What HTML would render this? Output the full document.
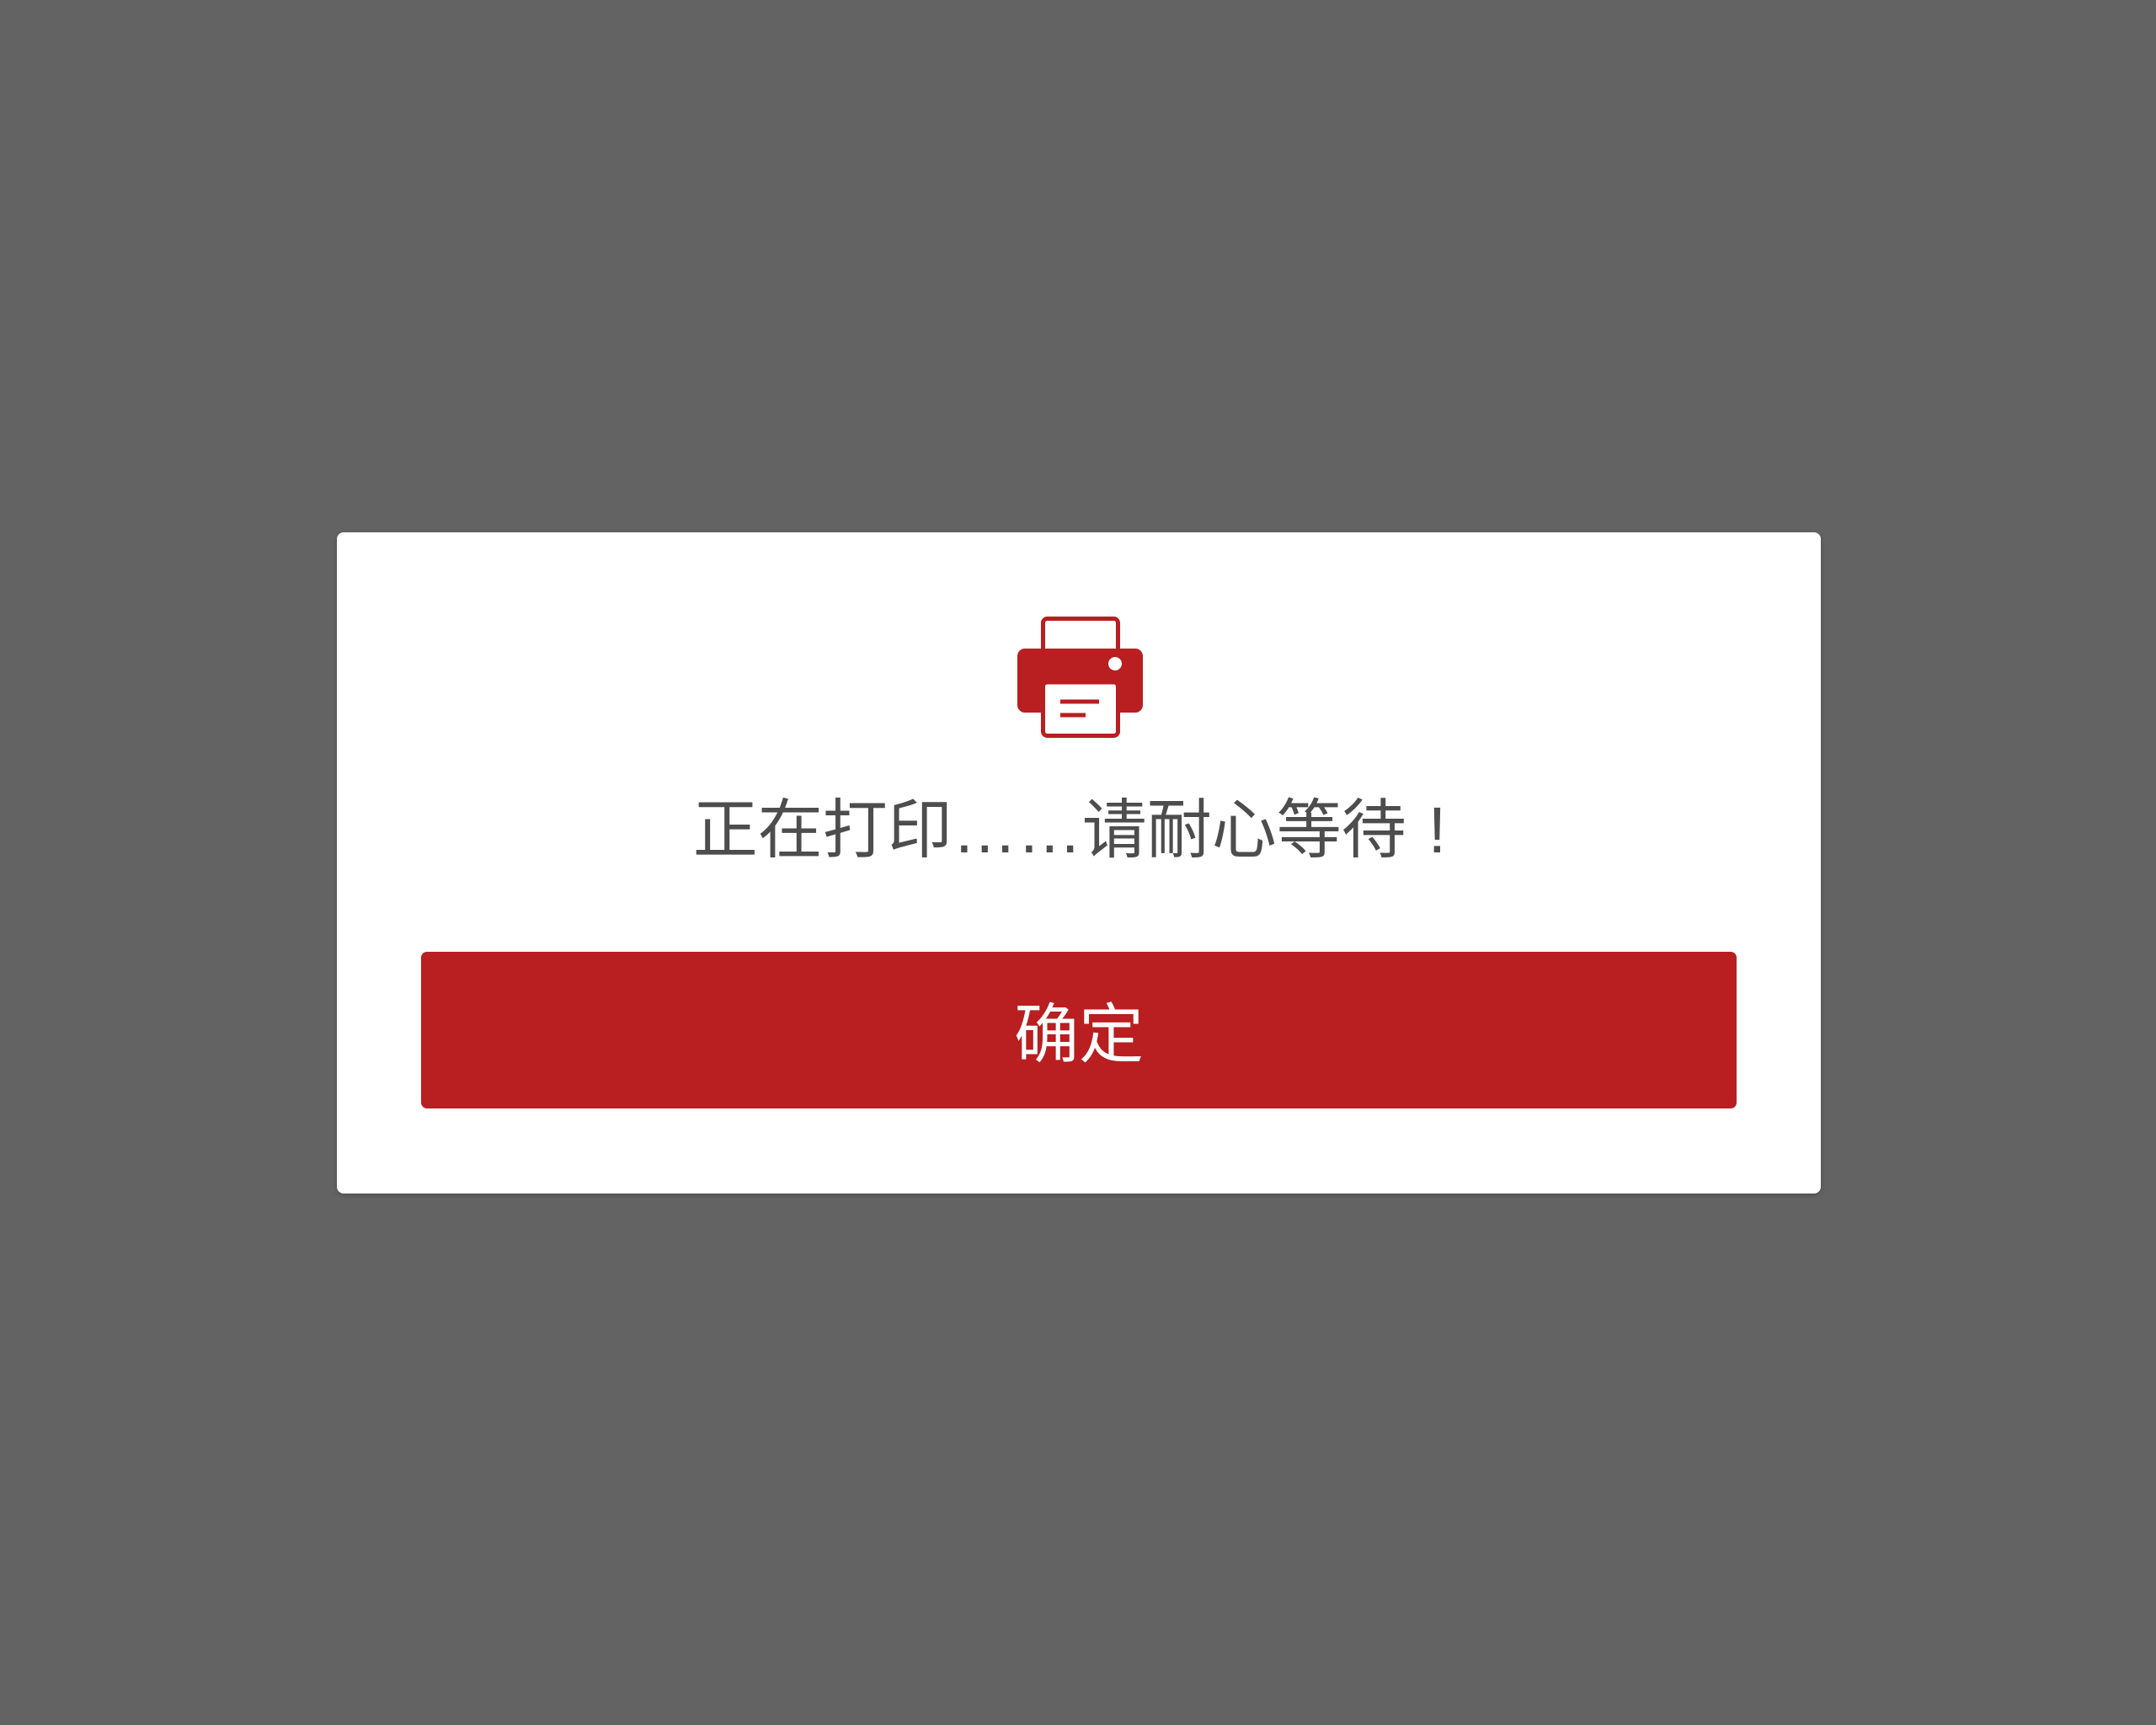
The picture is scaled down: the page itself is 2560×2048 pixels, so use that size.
<!DOCTYPE html>
<html><head><meta charset="utf-8"><style>
html,body{margin:0;padding:0;width:2560px;height:2048px;background:#636363;overflow:hidden;font-family:"Liberation Sans","Noto Sans CJK SC",sans-serif}
.dlg{position:absolute;left:400px;top:632px;width:1762px;height:785px;background:#fff;border-radius:8px;box-shadow:0 2px 6px rgba(0,0,0,.2)}
.msg{position:absolute;left:0;width:2560px;text-align:center;top:938px;font-size:77px;line-height:96px;color:#4d4d4d}
.msg .ex{padding-left:26px;padding-right:20px}
.btn{position:absolute;left:500px;top:1130px;width:1562px;height:186px;background:#b91e20;border-radius:7px;color:#fff;font-size:77px;line-height:186px;text-align:center}
.btn span{position:relative;top:6px}
</style></head><body>
<div class="dlg"></div>
<svg style="position:absolute;left:0;top:0" width="2560" height="2048">
<rect x="1238.5" y="734.5" width="89" height="60" rx="5" fill="#fff" stroke="#b91e20" stroke-width="5"/>
<rect x="1208" y="770" width="149" height="76" rx="9" fill="#b91e20"/>
<rect x="1238.5" y="810" width="89" height="63.5" rx="5" fill="#fff" stroke="#b91e20" stroke-width="5"/>
<rect x="1241" y="800" width="84" height="10" fill="#b91e20"/>
<circle cx="1324" cy="788" r="8" fill="#fff"/>
<rect x="1259" y="830.5" width="46" height="5" fill="#b91e20"/>
<rect x="1259" y="846.5" width="30" height="5" fill="#b91e20"/>
</svg>
<div class="msg">正在打印……请耐心等待<span class="ex">!</span></div>
<div class="btn"><span>确定</span></div>
</body></html>
